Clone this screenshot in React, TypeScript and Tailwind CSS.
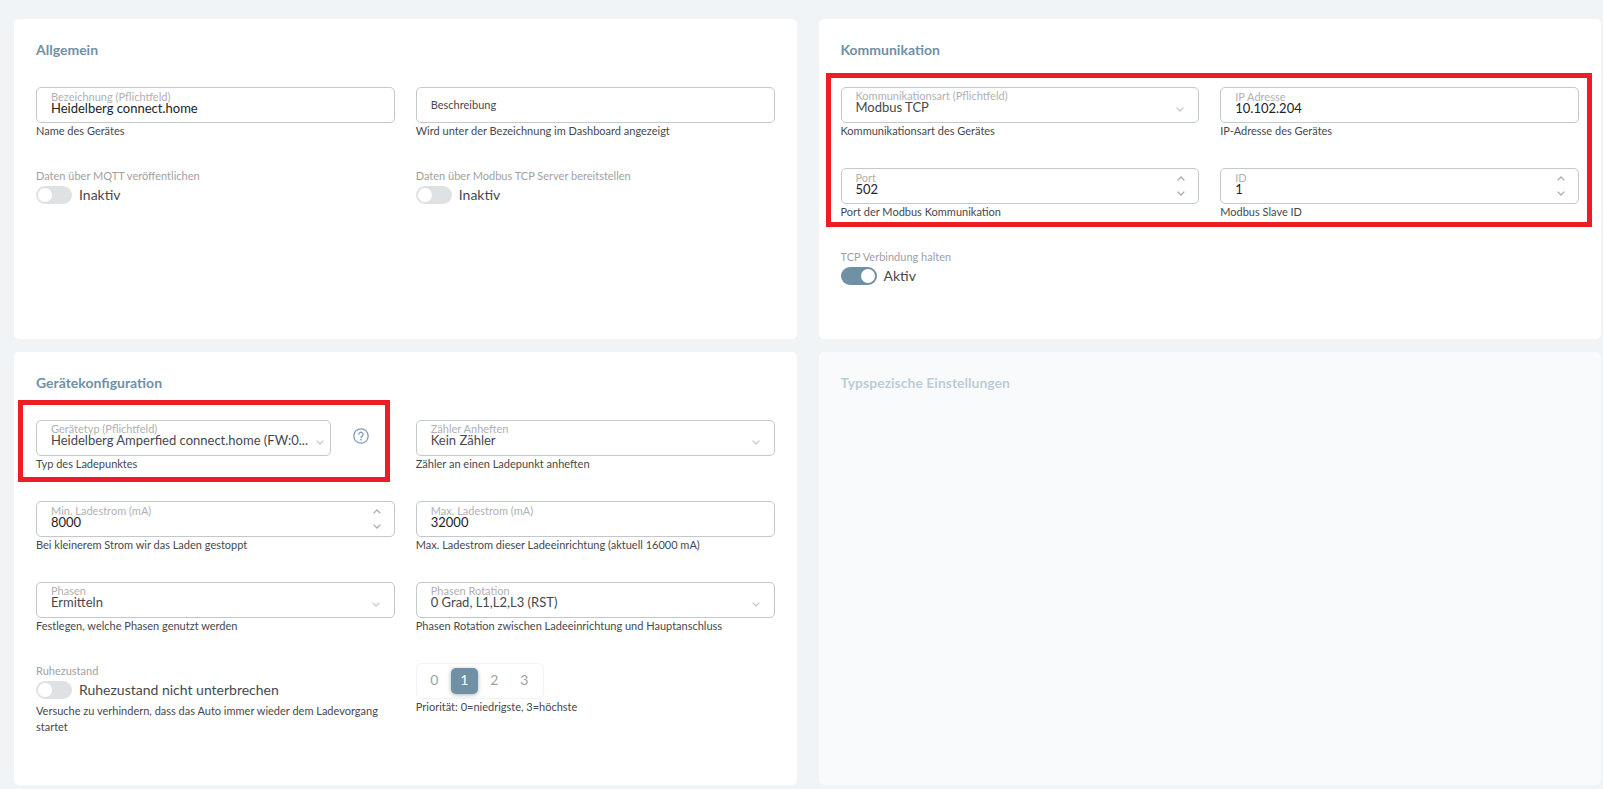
import { useId, useState } from "react";
import type { ReactNode } from "react";

function Card({ title, disabled, children }: { title: string; disabled?: boolean; children?: ReactNode }) {
  return (
    <section
      className={`rounded-[5px] px-[22px] pt-[22px] pb-[50px] ${disabled ? "bg-white/50" : "bg-white"}`}
    >
      <h2
        className={`mb-7 text-[14px] leading-[18px] font-bold ${disabled ? "text-[#7090a6]/45" : "text-[#7090a6]"}`}
      >
        {title}
      </h2>
      {children}
    </section>
  );
}

function Columns({ children }: { children: ReactNode }) {
  return <div className="grid grid-cols-2 items-start gap-x-[21px] gap-y-[29px]">{children}</div>;
}

function Highlight({ className }: { className: string }) {
  return <div className={`pointer-events-none absolute border-[5px] border-[#ee1c25] ${className}`} />;
}

function Helper({ children }: { children: ReactNode }) {
  return <p className="text-[11px] leading-4 text-[#47484d]">{children}</p>;
}

function Chevron({ up, className }: { up?: boolean; className: string }) {
  return (
    <svg viewBox="0 0 8 5" className={`h-[5px] w-2 ${className}`} fill="none" stroke="currentColor" strokeWidth="1.3">
      <path d={up ? "M0.6 4.4 4 1 7.4 4.4" : "M0.6 0.6 4 4 7.4 0.6"} />
    </svg>
  );
}

const frame = "relative h-9 rounded-[5px] border border-[#c3c8ca]";
const floating = "pointer-events-none absolute left-[14px] text-[11px] leading-3 text-[#b0b1b3]";

function TextField({ label, initial = "", helper, numeric }: { label: string; initial?: string; helper: string; numeric?: boolean }) {
  const id = useId();
  const [value, setValue] = useState(initial);
  const step = (n: number) => setValue(String(Number(value) + n));
  return (
    <div>
      <div className={frame}>
        <label
          htmlFor={id}
          className={
            value
              ? `${floating} top-[3px]`
              : "pointer-events-none absolute top-[11px] left-[14px] text-[11px] leading-3 text-[#47484d]"
          }
        >
          {label}
        </label>
        <input
          id={id}
          value={value}
          onChange={(e) => setValue(e.target.value)}
          className="block h-full w-full rounded-[5px] bg-transparent px-[14px] pt-[5px] text-[13px] text-[#222326] outline-none"
        />
        {numeric && (
          <div className="absolute inset-y-0 right-[13px] flex flex-col justify-center gap-[10px] text-[#a9abad]">
            <button type="button" aria-label={`${label} erhöhen`} onClick={() => step(1)}>
              <Chevron up className="block" />
            </button>
            <button type="button" aria-label={`${label} verringern`} onClick={() => step(-1)}>
              <Chevron className="block" />
            </button>
          </div>
        )}
      </div>
      <Helper>{helper}</Helper>
    </div>
  );
}

function SelectField({ label, value, helper, compact }: { label: string; value: string; helper: string; compact?: boolean }) {
  const id = useId();
  return (
    <div className="min-w-0 flex-1">
      <div className={frame}>
        <label htmlFor={id} className={`${floating} top-[2px]`}>
          {label}
        </label>
        <select
          id={id}
          className={`block h-full w-full appearance-none rounded-[5px] bg-transparent pt-[5px] pl-[14px] text-[13px] text-[#47484d] outline-none ${compact ? "pr-4" : "pr-7"}`}
        >
          <option>{value}</option>
        </select>
        <Chevron
          className={`pointer-events-none absolute top-[19px] text-[#c6c9cc] ${compact ? "right-[6px]" : "right-[14px]"}`}
        />
      </div>
      <Helper>{helper}</Helper>
    </div>
  );
}

function Toggle({ label, text, on = false, helper }: { label: string; text: string; on?: boolean; helper?: string }) {
  const id = useId();
  return (
    <div>
      <p className="mb-0.5 text-[11px] leading-4 text-[#a0a1a4]">{label}</p>
      <div className="mb-1 flex h-[18px] items-center gap-[7px]">
        <input
          id={id}
          type="checkbox"
          role="switch"
          aria-label={label}
          defaultChecked={on}
          className="flex h-[18px] w-9 shrink-0 appearance-none items-center rounded-full bg-[#dfe2e5] px-0.5 before:block before:size-[14px] before:rounded-full before:bg-white checked:justify-end checked:bg-[#7090a6]"
        />
        <label htmlFor={id} className="text-[14px] leading-[18px] text-[#47484d]">
          {text}
        </label>
      </div>
      {helper && <Helper>{helper}</Helper>}
    </div>
  );
}

function Priority() {
  const [active, setActive] = useState(1);
  return (
    <div>
      <div className="flex h-9 w-fit items-center gap-[3px] rounded-[6px] border border-[#f1f4f7] pr-[5px] pl-1">
        {[0, 1, 2, 3].map((n) => (
          <button
            key={n}
            type="button"
            aria-pressed={n === active}
            onClick={() => setActive(n)}
            className={`h-[26px] w-[27px] rounded-[5px] pb-0.5 text-[14px] leading-6 ${
              n === active ? "bg-[#7090a6] text-white shadow-[0_1px_4px_rgba(0,0,0,0.3)]" : "text-[#a0a1a4]"
            }`}
          >
            {n}
          </button>
        ))}
      </div>
      <Helper>Priorität: 0=niedrigste, 3=höchste</Helper>
    </div>
  );
}

export default function App() {
  return (
    <main className="grid min-h-screen grid-cols-2 content-start gap-x-[22px] gap-y-[13px] bg-[#f1f4f7] pt-[19px] pr-[2px] pb-1 pl-[14px] font-['Lato',sans-serif]">
      <Card title="Allgemein">
        <Columns>
          <TextField label="Bezeichnung (Pflichtfeld)" initial="Heidelberg connect.home" helper="Name des Gerätes" />
          <TextField label="Beschreibung" helper="Wird unter der Bezeichnung im Dashboard angezeigt" />
          <Toggle label="Daten über MQTT veröffentlichen" text="Inaktiv" />
          <Toggle label="Daten über Modbus TCP Server bereitstellen" text="Inaktiv" />
        </Columns>
      </Card>

      <Card title="Kommunikation">
        <div className="relative mb-[29px]">
          <Columns>
            <SelectField label="Kommunikationsart (Pflichtfeld)" value="Modbus TCP" helper="Kommunikationsart des Gerätes" />
            <TextField label="IP Adresse" initial="10.102.204" helper="IP-Adresse des Gerätes" />
            <TextField label="Port" initial="502" helper="Port der Modbus Kommunikation" numeric />
            <TextField label="ID" initial="1" helper="Modbus Slave ID" numeric />
          </Columns>
          <Highlight className="-top-[14px] -right-[13px] -bottom-[7px] -left-[15px]" />
        </div>
        <Toggle label="TCP Verbindung halten" text="Aktiv" on />
      </Card>

      <Card title="Gerätekonfiguration">
        <Columns>
          <div className="relative flex items-start">
            <SelectField
              label="Gerätetyp (Pflichtfeld)"
              value="Heidelberg Amperfied connect.home (FW:0..."
              helper="Typ des Ladepunktes"
              compact
            />
            <button type="button" aria-label="Hilfe" className="mt-2 mr-[26px] ml-[22px] text-[#7b9dbd]">
              <svg viewBox="0 0 16 16" className="block size-4" fill="none" stroke="currentColor" strokeWidth="1.3" strokeLinecap="round">
                <circle cx="8" cy="8" r="7.2" />
                <path d="M5.9 6.3a2.1 2.1 0 1 1 3.3 1.8c-.8.5-1.2.8-1.2 1.5" />
                <path d="M8 11.6v.1" strokeWidth="1.6" />
              </svg>
            </button>
            <Highlight className="-top-5 right-[5px] -bottom-[10px] -left-[18px]" />
          </div>
          <SelectField label="Zähler Anheften" value="Kein Zähler" helper="Zähler an einen Ladepunkt anheften" />
          <TextField label="Min. Ladestrom (mA)" initial="8000" helper="Bei kleinerem Strom wir das Laden gestoppt" numeric />
          <TextField label="Max. Ladestrom (mA)" initial="32000" helper="Max. Ladestrom dieser Ladeeinrichtung (aktuell 16000 mA)" />
          <SelectField label="Phasen" value="Ermitteln" helper="Festlegen, welche Phasen genutzt werden" />
          <SelectField label="Phasen Rotation" value="0 Grad, L1,L2,L3 (RST)" helper="Phasen Rotation zwischen Ladeeinrichtung und Hauptanschluss" />
          <Toggle
            label="Ruhezustand"
            text="Ruhezustand nicht unterbrechen"
            helper="Versuche zu verhindern, dass das Auto immer wieder dem Ladevorgang startet"
          />
          <Priority />
        </Columns>
      </Card>

      <Card title="Typspezische Einstellungen" disabled />
    </main>
  );
}
